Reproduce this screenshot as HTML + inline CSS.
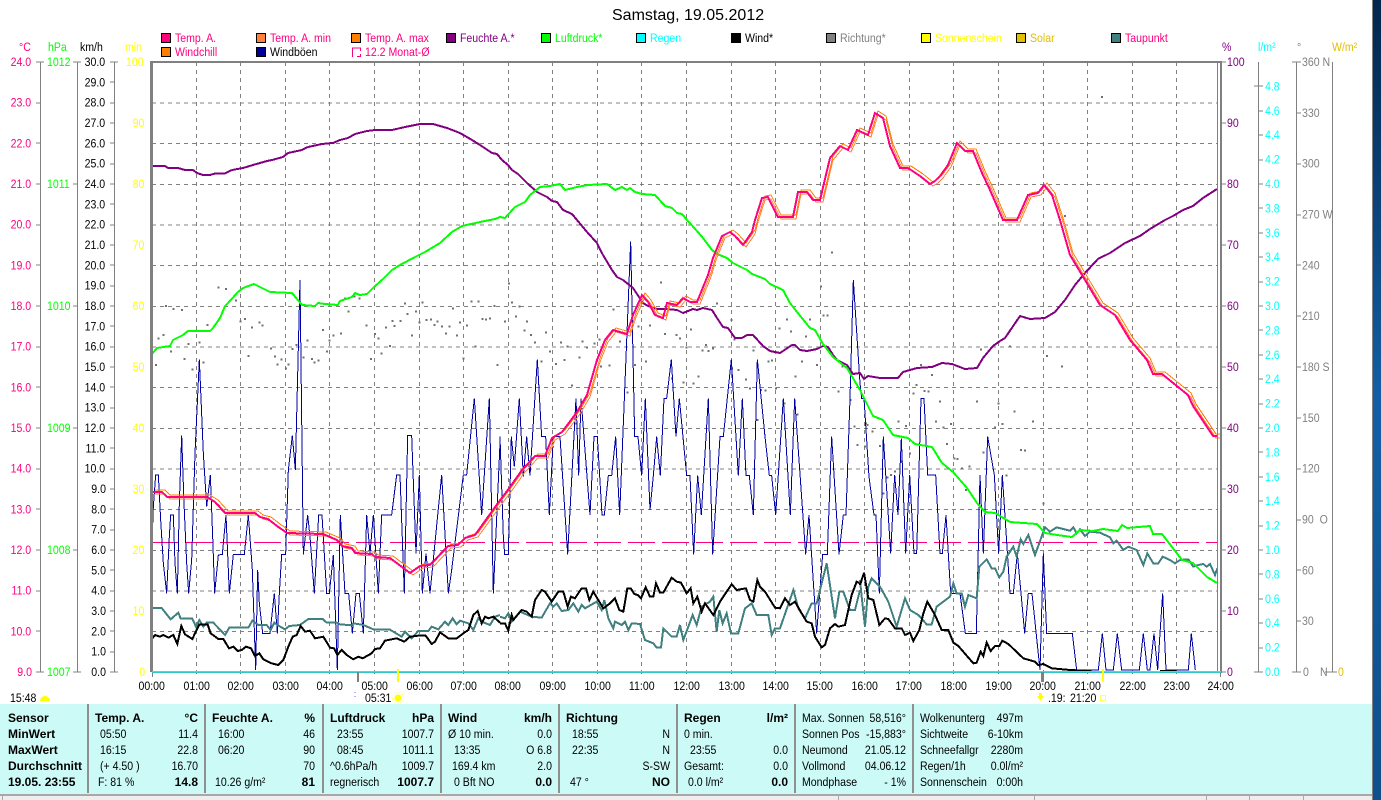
<!DOCTYPE html>
<html><head><meta charset="utf-8"><title>Samstag, 19.05.2012</title>
<style>
html,body{margin:0;padding:0;background:#fff;width:1381px;height:800px;overflow:hidden}
svg{position:absolute;left:0;top:0;display:block}
text{font-family:"Liberation Sans",sans-serif;font-size:12px;transform-box:fill-box;transform:scaleX(.88);transform-origin:0 50%;white-space:pre}
text[text-anchor=end]{transform-origin:100% 50%}
text[text-anchor=middle]{transform-origin:50% 50%}
text.b{font-weight:bold;transform:none}
text.t{font-size:16px;transform:none}
polyline,.l{fill:none;vector-effect:non-scaling-stroke;shape-rendering:crispEdges}
</style></head><body>
<svg width="1381" height="800" viewBox="0 0 1381 800" xmlns="http://www.w3.org/2000/svg">
<defs>
<linearGradient id="bg" x1="0" y1="0" x2="0" y2="1"><stop offset="0" stop-color="#03264c"/><stop offset=".5" stop-color="#125fa6"/><stop offset="1" stop-color="#0f4f8c"/></linearGradient>
<polyline id="temp" points="152,492 162,492 167,497 207,497 215,502 225,513 255,513 260,517 268,519 277,526 287,533 323,534 337,540 342,546 352,548 355,553 372,554 375,557 390,558 398,564 410,573 420,566 430,565 448,546 458,545 465,538 475,535 498,503 510,487 522,470 535,456 545,456 552,438 562,432 577,412 587,395 597,360 605,340 613,330 627,334 633,315 642,295 648,302 655,315 663,318 667,303 677,305 683,298 690,302 697,302 708,275 713,258 722,236 730,232 735,236 743,245 752,232 755,220 762,198 768,197 778,217 793,217 798,192 807,192 813,200 820,200 830,158 840,146 848,150 857,130 868,135 875,113 883,118 890,146 900,168 908,168 920,176 930,184 935,181 940,176 948,165 957,143 965,151 973,151 982,173 990,190 1003,220 1017,220 1028,195 1038,193 1044,185 1052,195 1060,220 1070,255 1085,280 1100,305 1115,315 1130,340 1147,360 1153,374 1162,374 1188,395 1193,406 1213,436 1217,436"/>
</defs>
<rect x="1372" y="0" width="1" height="800" fill="#808080"/>
<rect x="1373" y="0" width="8" height="800" fill="url(#bg)"/>

<text class="t" x="612" y="20" fill="#000">Samstag, 19.05.2012</text>

<!-- legend -->
<g stroke="#000" stroke-width="1">
<rect x="161.5" y="33.5" width="9" height="9" fill="#ff0080"/>
<rect x="256.5" y="33.5" width="9" height="9" fill="#ff8040"/>
<rect x="351.5" y="33.5" width="9" height="9" fill="#ff8000"/>
<rect x="446.5" y="33.5" width="9" height="9" fill="#800080"/>
<rect x="541.5" y="33.5" width="9" height="9" fill="#00ff00"/>
<rect x="636.5" y="33.5" width="9" height="9" fill="#00ffff"/>
<rect x="731.5" y="33.5" width="9" height="9" fill="#000"/>
<rect x="826.5" y="33.5" width="9" height="9" fill="#808080"/>
<rect x="921.5" y="33.5" width="9" height="9" fill="#ffff00"/>
<rect x="1016.5" y="33.5" width="9" height="9" fill="#e0c000"/>
<rect x="1111.5" y="33.5" width="9" height="9" fill="#408080"/>
<rect x="161.5" y="47.5" width="9" height="9" fill="#ff8000"/>
<rect x="256.5" y="47.5" width="9" height="9" fill="#000099"/>
</g>
<path class="l" d="M352.5 57V48H360.5V51M360.5 54V56.5H357" stroke="#ff0080"/>
<g>
<text x="175" y="42" fill="#ff0080">Temp. A.</text>
<text x="270" y="42" fill="#ff0080">Temp. A. min</text>
<text x="365" y="42" fill="#ff0080">Temp. A. max</text>
<text x="460" y="42" fill="#800080">Feuchte A.*</text>
<text x="555" y="42" fill="#00ff00">Luftdruck*</text>
<text x="650" y="42" fill="#00ffff">Regen</text>
<text x="745" y="42" fill="#000">Wind*</text>
<text x="840" y="42" fill="#808080">Richtung*</text>
<text x="935" y="42" fill="#ffff00">Sonnenschein</text>
<text x="1030" y="42" fill="#e0c000">Solar</text>
<text x="1125" y="42" fill="#ff0080">Taupunkt</text>
<text x="175" y="56" fill="#ff0080">Windchill</text>
<text x="270" y="56" fill="#000">Windböen</text>
<text x="365" y="56" fill="#ff0080">12.2 Monat-Ø</text>
</g>

<!-- axis units -->
<text x="19" y="51" fill="#ff0080">°C</text>
<text x="48" y="51" fill="#00ff00">hPa</text>
<text x="80" y="51" fill="#000">km/h</text>
<text x="125" y="51" fill="#ffff00">min</text>
<text x="1222" y="51" fill="#800080">%</text>
<text x="1258" y="51" fill="#00ffff">l/m²</text>
<text x="1297" y="51" fill="#808080">°</text>
<text x="1332" y="51" fill="#e0c000">W/m²</text>

<!-- grid -->
<path class="l" stroke="#808080" stroke-dasharray="4 4" d="M196.5 62V677M240.5 62V677M285.5 62V677M329.5 62V677M374.5 62V677M419.5 62V677M463.5 62V677M508.5 62V677M552.5 62V677M597.5 62V677M641.5 62V677M686.5 62V677M731.5 62V677M775.5 62V677M820.5 62V677M864.5 62V677M909.5 62V677M953.5 62V677M998.5 62V677M1043.5 62V677M1087.5 62V677M1132.5 62V677M1176.5 62V677"/>
<path class="l" stroke="#808080" stroke-dasharray="4 4" d="M152 103H1218M152 143.5H1218M152 184.5H1218M152 225H1218M152 265.5H1218M152 306.5H1218M152 347H1218M152 387.5H1218M152 428.5H1218M152 469H1218M152 509.5H1218M152 550.5H1218M152 591H1218M152 631.5H1218"/>
<path class="l" stroke="#808080" d="M152.5 672V677M1220.5 672V677"/>

<!-- direction dots -->
<g transform="translate(140 270) scale(.33333)">
<path class="l" stroke="#707070" stroke-width="2" d="M45 285h6M53 205h6M67 195h6M90 245h6M75 108h6M98 117h6M123 120h6M131 267h6M143 222h6M155 298h6M175 217h6M188 278h6M200 165h6M233 53h6M255 57h6M285 92h6M298 155h6M312 147h6M323 258h6M333 173h6M355 157h6M365 167h6M390 236h6M402 260h6M410 283h6M422 268h6M435 295h6M442 283h6M455 237h6M467 225h6M488 263h6M500 212h6M513 267h6M520 277h6M533 272h6M546 180h6M558 245h6M566 212h6M578 197h6M600 190h6M612 85h6M623 125h6M640 80h6M655 85h6M677 167h6M690 267h6M702 192h6M713 205h6M722 250h6M735 173h6M747 228h6M755 153h6M760 168h6M778 153h6M792 100h6M800 132h6M813 197h6M825 125h6M835 158h6M845 98h6M857 150h6M870 148h6M880 165h6M890 155h6M903 170h6M915 190h6M925 170h6M936 115h6M948 197h6M957 157h6M968 265h6M978 167h6M992 95h6M1003 230h6M1013 95h6M1025 147h6M1035 148h6M1047 146h6M1060 108h6M1070 285h6"/>
</g>
<g transform="translate(500 220) scale(.33333)">
<path class="l" stroke="#707070" stroke-width="2" d="M24 190h6M33 248h6M12 305h6M45 290h6M55 260h6M70 332h6M78 305h6M90 345h6M102 368h6M122 425h6M135 338h6M147 395h6M165 432h6M180 368h6M190 420h6M200 380h6M213 497h6M225 610h6M235 413h6M245 365h6M258 383h6M280 370h6M295 358h6M300 440h6M325 437h6M337 268h6M345 335h6M357 365h6M380 518h6M402 435h6M413 320h6M435 425h6M447 317h6M480 188h6M492 342h6M513 475h6M527 345h6M537 355h6M547 488h6M557 382h6M570 328h6M578 490h6M592 470h6M604 392h6M615 375h6M622 393h6M636 385h6M648 250h6M692 300h6M700 358h6M693 445h6M713 450h6M735 478h6M747 505h6M758 392h6M770 600h6M780 510h6M793 512h6M803 425h6M813 422h6M825 505h6M835 325h6M850 550h6M858 298h6M870 335h6M883 470h6M890 583h6M903 425h6M915 350h6M927 298h6M948 435h6M960 200h6M968 287h6M980 287h6M993 98h6M1013 515h6M1025 440h6M1048 540h6M1060 620h6M1070 675h6"/>
</g>
<g transform="translate(860 340) scale(.33333)">
<path class="l" stroke="#707070" stroke-width="2" d="M15 250h6M20 255h6M35 275h6M12 320h6M57 318h6M68 460h6M80 412h6M90 405h6M102 395h6M113 245h6M123 365h6M135 258h6M147 340h6M158 160h6M167 135h6M180 75h6M190 153h6M202 155h6M213 105h6M225 245h6M237 185h6M247 262h6M258 312h6M270 252h6M280 355h6M290 357h6M303 385h6M315 450h6M325 380h6M348 185h6M360 28h6M368 338h6M402 263h6M413 190h6M425 252h6M437 407h6M447 20h6M460 215h6M480 330h6M492 332h6M516 245h6M558 48h6M603 80h6M548 490h6"/>
</g>
<path class="l" stroke="#707070" stroke-width="2" d="M1101 97h2M1064 216h2"/>

<!-- 12.2 monthly mean -->
<path class="l" stroke="#ff0080" stroke-dasharray="27 7" d="M152 542.5H1218"/>

<!-- gusts -->
<g transform="translate(140 270) scale(.33333)">
<polyline stroke="#0000a0" stroke-width="1" points="35,850 40,710 47,615 55,615 62,750 70,880 80,970 88,800 92,735 100,735 105,880 112,970 118,700 125,497 132,700 140,880 146,970 155,870 165,550 178,268 190,550 200,710 211,615 218,800 224,970 235,855 247,853 258,735 268,970 280,853 313,853 325,735 337,900 347,1200 353,900 358,1000 368,1090 390,1090 403,970 412,1090 418,970 425,853 437,853 445,600 457,497 466,600 480,30 490,853 503,735 510,800 523,970 536,735 546,735 560,970 568,970 580,855 592,1200 601,735 615,970 626,970 637,1090 648,970 658,970 670,1090 680,735 690,850 700,735 715,970 725,735 755,735 770,615 780,615 793,970 803,497 815,497 828,850 838,615 847,970 858,850 870,970 905,615 925,970 935,900 970,615 980,615 1003,385 1025,735 1048,385 1060,970 1080,520"/>
<polyline stroke="#408080" stroke-width="2" points="35,1014 65,1014 92,1048 115,1028 122,1046 157,1046 168,1070 178,1050 190,1070 200,1058 220,1058 255,1095 268,1073 325,1073 337,1052 355,1065 380,1065 392,1080 403,1058 412,1065 435,1078 448,1068 480,1065 505,1047 548,1047 560,1058 590,1058 600,1063 635,1066 640,1060 670,1065 700,1078 748,1078 785,1100 795,1085 815,1105 835,1083 865,1083 875,1070 895,1078 915,1055 925,1065 938,1045 950,1063 960,1052 985,1060 1000,1080 1015,1045 1025,1055 1050,1065 1065,1040 1080,1035"/>
<polyline stroke="#000" stroke-width="2" points="35,1108 45,1095 60,1100 70,1095 85,1103 100,1095 112,1122 124,1068 135,1093 157,1107 178,1063 203,1063 212,1090 235,1107 250,1107 267,1135 280,1130 293,1143 305,1140 318,1130 333,1135 345,1158 358,1150 370,1168 395,1180 415,1185 430,1170 445,1130 458,1100 470,1095 482,1068 495,1085 510,1082 525,1105 550,1100 570,1133 582,1135 592,1155 605,1140 620,1155 640,1168 655,1160 668,1165 695,1150 705,1137 720,1135 735,1112 770,1105 793,1115 810,1100 835,1097 857,1097 875,1122 885,1115 900,1087 925,1105 950,1105 970,1090 985,1080 1000,1035 1013,1023 1025,1060 1035,1040 1045,1045 1060,1040 1080,1058"/>
</g>
<g transform="translate(500 220) scale(.33333)">
<polyline stroke="#0000a0" stroke-width="1" points="0,650 10,950 14,1003 25,1003 34,650 43,740 58,535 70,770 80,650 90,767 112,418 125,650 137,650 148,885 160,650 180,650 203,1003 228,535 236,767 243,535 270,885 282,650 292,650 306,885 313,885 325,767 335,767 347,650 359,885 392,65 404,650 414,650 425,767 436,535 450,870 460,767 470,650 481,767 492,535 500,535 514,418 528,650 538,535 560,767 570,767 581,1003 593,767 604,885 625,535 638,1003 660,650 670,650 694,418 715,767 727,535 738,767 748,767 760,885 772,418 795,650 808,767 815,767 827,885 850,535 871,885 884,535 917,1003 927,885 950,1240 968,1003 982,1003 995,650 1017,1003 1030,885 1038,885 1050,535 1060,180 1080,490"/>
<polyline stroke="#408080" stroke-width="2" points="0,1190 15,1195 25,1180 35,1205 60,1175 95,1190 125,1193 150,1150 160,1160 170,1150 185,1173 205,1170 220,1150 235,1175 245,1155 255,1165 290,1145 305,1170 313,1140 325,1195 340,1225 345,1205 365,1215 375,1205 385,1230 395,1210 420,1212 435,1260 460,1270 470,1283 483,1283 490,1225 515,1250 530,1250 540,1215 550,1260 578,1185 590,1215 605,1160 630,1145 640,1130 650,1235 658,1170 668,1210 680,1180 693,1240 715,1240 735,1165 755,1150 770,1185 805,1185 815,1245 825,1225 840,1225 880,1110 895,1165 915,1195 935,1150 950,1150 965,1090 980,1030 1005,1195 1018,1115 1030,1115 1050,1170 1065,1170 1080,1110"/>
<polyline stroke="#000" stroke-width="2" points="0,1210 15,1210 25,1232 35,1185 40,1200 65,1170 80,1175 95,1190 105,1140 125,1110 135,1115 155,1145 175,1115 190,1115 203,1160 213,1130 225,1135 245,1105 258,1105 268,1140 280,1115 310,1165 330,1150 345,1135 358,1170 370,1175 382,1105 392,1105 403,1122 413,1125 423,1135 437,1102 450,1130 460,1130 468,1090 480,1118 490,1118 515,1073 530,1085 543,1088 560,1120 572,1105 580,1150 592,1130 605,1175 615,1150 640,1185 660,1145 680,1115 695,1093 710,1110 738,1105 750,1140 760,1145 772,1080 780,1100 795,1115 825,1163 840,1165 855,1135 870,1155 885,1145 905,1180 920,1205 935,1210 945,1250 965,1282 975,1275 990,1225 1005,1212 1015,1220 1035,1215 1055,1125 1070,1085 1080,1090"/>
</g>
<g transform="translate(860 340) scale(.33333)">
<polyline stroke="#0000a0" stroke-width="1" points="0,130 5,175 12,175 27,410 42,525 48,525 58,760 70,290 92,640 104,405 114,525 124,295 137,640 149,405 162,640 170,640 183,175 192,175 203,405 227,405 240,640 247,640 258,525 272,760 300,760 316,880 349,880 360,405 370,640 383,290 403,405 416,640 427,405 450,760 460,760 472,640 494,880 505,760 516,760 540,990 550,640 560,880 637,880 650,990 715,990 727,880 738,990 760,990 772,880 785,990 838,990 850,880 862,990 870,990 882,880 893,990 900,880 908,760 918,990 985,990 994,880 1006,990"/>
<polyline stroke="#408080" stroke-width="2" points="0,720 5,770 15,860 25,740 35,715 60,740 85,785 110,860 135,775 150,810 175,825 200,853 215,853 230,800 270,770 280,730 290,760 305,760 315,800 325,765 350,775 358,680 380,658 395,685 405,685 418,712 430,695 440,650 460,620 470,650 482,598 490,612 505,585 525,645 555,562 570,575 590,562 630,572 640,562 650,580 660,568 675,588 690,575 720,578 750,592 760,610 770,602 790,630 805,620 830,630 850,675 862,640 880,670 895,670 908,650 930,660 945,670 960,660 985,658 1000,680 1015,675 1030,672 1040,680 1050,672 1065,705 1072,685"/>
<polyline stroke="#000" stroke-width="2" points="0,735 12,698 25,775 40,780 58,855 75,835 85,837 105,865 125,865 135,885 150,878 160,903 178,870 190,820 202,785 225,825 245,870 265,870 280,908 295,918 340,970 350,968 362,935 370,948 380,908 392,933 405,918 418,918 427,902 445,912 490,955 525,965 535,975 550,972 575,985 630,990 695,993"/>
<polyline stroke="#000" stroke-width="2" points="900,993 950,993"/>
</g>

<!-- humidity -->
<polyline stroke="#800080" stroke-width="2" points="152,166 165,166 168,168 178,168 185,170 193,170 197,173 203,175 210,175 215,173.5 225,173.5 232,170 243,168 253,165 267,161 272,160 283,157 288,153 302,150 308,147 322,144 333,143 340,140 348,138 355,134 367,131 375,130 392,130 405,127 420,124 433,124 447,128 460,133 472,140 480,145 492,153 497,154 502,160 508,165 512,170 518,174 527,183 537,192 547,197 552,201 557,202 563,210 572,214 577,220 587,232 597,243 603,255 612,270 617,277 623,280 633,288 643,303 648,306 657,309 667,309 677,310 683,313 693,309 697,310 703,308 712,310 717,318 723,327 728,328 735,338 742,338 747,335 753,335 763,346 770,351 780,353 792,345 795,345 800,350 807,351 817,349 823,346 828,347 833,355 837,360 847,365 853,374 860,373 864,379 868,376 880,378 898,378 903,372 917,368 932,367 942,363 952,364 965,369 977,368 983,358 993,346 1000,341 1005,338 1020,316 1030,319 1045,318 1055,312 1065,300 1075,285 1085,273 1098,259 1110,253 1125,243 1140,236 1150,229 1165,220 1173,216 1183,210 1193,206 1203,198 1217,189"/>
<!-- pressure -->
<polyline stroke="#00ff00" stroke-width="2" points="152,354 157,348 170,346 173,340 183,335 188,331 195,331 210,331 213,328 220,318 225,306 228,303 238,292 243,288 254,284 262,288 270,292 292,293 302,305 315,306 318,303 325,304 338,305 340,301 352,297 355,293 360,295 367,294 373,288 383,279 392,270 400,265 415,257 425,252 440,243 452,232 462,226 480,222 495,219 500,217 505,218 515,207 525,202 530,195 540,187 550,186 560,184 565,190 577,187 588,185 607,184 615,190 622,187 627,190 630,188 635,192 642,194 655,195 665,206 672,208 677,213 682,214 687,220 697,231 703,238 712,250 717,254 727,258 733,263 747,270 752,274 765,279 770,284 783,290 790,303 797,312 810,328 815,330 823,344 833,357 847,368 860,390 873,416 883,420 893,435 908,438 915,444 932,447 942,463 953,472 967,488 977,503 985,512 995,513 1010,522 1037,524 1045,533 1057,535 1072,537 1080,530 1093,531 1103,529 1118,531 1122,525 1127,528 1150,526 1153,534 1162,534 1172,547 1182,560 1193,563 1207,577 1217,583"/>
<!-- temperature -->
<use href="#temp" transform="translate(3 -2)" stroke="#ff8000" stroke-width="1" fill="none"/>
<use href="#temp" transform="translate(3 2)" stroke="#ff8040" stroke-width="1" fill="none"/>
<use href="#temp" stroke="#ff0080" stroke-width="2" fill="none"/>

<!-- frame -->
<rect x="150" y="61" width="3" height="611" fill="#808080"/>
<rect x="150" y="61" width="1072" height="2" fill="#808080"/>
<rect x="1220" y="61" width="2" height="612" fill="#808080"/>
<rect x="1217" y="62" width="1" height="610" fill="#808080"/>
<rect x="152" y="672" width="1069" height="1" fill="#33c8c8"/>
<rect x="152" y="671" width="1069" height="1" fill="#40e0e0"/>
<rect x="357" y="672" width="2" height="10" fill="#808080"/>
<rect x="397" y="669" width="2" height="13" fill="#ffff00"/>
<rect x="1041" y="672" width="3" height="10" fill="#808080"/>
<rect x="1102" y="669" width="2" height="13" fill="#ffff00"/>

<!-- axes -->
<path class="l" stroke="#808080" d="M40.5 62V672M77.5 62V672M114.5 62V672M1258.5 62V672M1296.5 62V672M1332.5 62V672"/>
<path class="l" stroke="#808080" d="M36 62H44M36 103H40M36 143H40M36 184H40M36 225H40M36 265H40M36 306H40M36 347H40M36 387H40M36 428H40M36 469H40M36 509H40M36 550H40M36 591H40M36 631H40M36 672H44"/>
<path class="l" stroke="#808080" d="M73 62H81M73 184H77M73 306H77M73 428H77M73 550H77M73 672H81"/>
<path class="l" stroke="#808080" d="M110 62H118M110 82H114M110 103H114M110 123H114M110 143H114M110 164H114M110 184H114M110 204H114M110 225H114M110 245H114M110 265H114M110 286H114M110 306H114M110 326H114M110 347H114M110 367H114M110 387H114M110 408H114M110 428H114M110 448H114M110 469H114M110 489H114M110 509H114M110 530H114M110 550H114M110 570H114M110 591H114M110 611H114M110 631H114M110 652H114M110 672H118"/>
<path class="l" stroke="#808080" d="M1221 62H1226M1221 123H1226M1221 184H1226M1221 245H1226M1221 306H1226M1221 367H1226M1221 428H1226M1221 489H1226M1221 550H1226M1221 611H1226M1221 672H1226"/>
<path class="l" stroke="#808080" d="M1254 86H1263M1258 111H1263M1258 135H1263M1258 160H1263M1258 184H1263M1258 208H1263M1258 233H1263M1258 257H1263M1258 282H1263M1258 306H1263M1258 330H1263M1258 355H1263M1258 379H1263M1258 404H1263M1258 428H1263M1258 452H1263M1258 477H1263M1258 501H1263M1258 526H1263M1258 550H1263M1258 574H1263M1258 599H1263M1258 623H1263M1258 648H1263M1254 672H1263"/>
<path class="l" stroke="#808080" d="M1292 62H1301M1296 113H1301M1296 164H1301M1296 215H1301M1296 265H1301M1296 316H1301M1296 367H1301M1296 418H1301M1296 469H1301M1296 520H1301M1296 570H1301M1296 621H1301M1292 672H1301M1325 672H1337"/>

<!-- axis labels -->
<g transform="translate(0 4)" fill="#ff0080" text-anchor="end">
<text x="34" y="62">24.0</text><text x="34" y="102.7">23.0</text><text x="34" y="143.3">22.0</text><text x="34" y="184">21.0</text><text x="34" y="224.7">20.0</text><text x="34" y="265.3">19.0</text><text x="34" y="306">18.0</text><text x="34" y="346.7">17.0</text><text x="34" y="387.3">16.0</text><text x="34" y="428">15.0</text><text x="34" y="468.7">14.0</text><text x="34" y="509.3">13.0</text><text x="34" y="550">12.0</text><text x="34" y="590.7">11.0</text><text x="34" y="631.3">10.0</text><text x="34" y="672">9.0</text>
</g>
<g transform="translate(0 4)" fill="#00ff00">
<text x="47" y="62">1012</text><text x="47" y="184">1011</text><text x="47" y="306">1010</text><text x="47" y="428">1009</text><text x="47" y="550">1008</text><text x="47" y="672">1007</text>
</g>
<g transform="translate(0 4)" fill="#000" text-anchor="end">
<text x="108" y="62">30.0</text><text x="108" y="82.3">29.0</text><text x="108" y="102.7">28.0</text><text x="108" y="123">27.0</text><text x="108" y="143.3">26.0</text><text x="108" y="163.7">25.0</text><text x="108" y="184">24.0</text><text x="108" y="204.3">23.0</text><text x="108" y="224.7">22.0</text><text x="108" y="245">21.0</text><text x="108" y="265.3">20.0</text><text x="108" y="285.7">19.0</text><text x="108" y="306">18.0</text><text x="108" y="326.3">17.0</text><text x="108" y="346.7">16.0</text><text x="108" y="367">15.0</text><text x="108" y="387.3">14.0</text><text x="108" y="407.7">13.0</text><text x="108" y="428">12.0</text><text x="108" y="448.3">11.0</text><text x="108" y="468.7">10.0</text><text x="108" y="489">9.0</text><text x="108" y="509.3">8.0</text><text x="108" y="529.7">7.0</text><text x="108" y="550">6.0</text><text x="108" y="570.3">5.0</text><text x="108" y="590.7">4.0</text><text x="108" y="611">3.0</text><text x="108" y="631.3">2.0</text><text x="108" y="651.7">1.0</text><text x="108" y="672">0.0</text>
</g>
<g transform="translate(0 4)" fill="#ffff00" text-anchor="end">
<text x="146" y="62">100</text><text x="146" y="123">90</text><text x="146" y="184">80</text><text x="146" y="245">70</text><text x="146" y="306">60</text><text x="146" y="367">50</text><text x="146" y="428">40</text><text x="146" y="489">30</text><text x="146" y="550">20</text><text x="146" y="611">10</text><text x="146" y="672">0</text>
</g>
<g transform="translate(0 4)" fill="#800080">
<text x="1227" y="62">100</text><text x="1227" y="123">90</text><text x="1227" y="184">80</text><text x="1227" y="245">70</text><text x="1227" y="306">60</text><text x="1227" y="367">50</text><text x="1227" y="428">40</text><text x="1227" y="489">30</text><text x="1227" y="550">20</text><text x="1227" y="611">10</text><text x="1227" y="672">0</text>
</g>
<g transform="translate(0 4)" fill="#00ffff">
<text x="1265" y="86.4">4.8</text><text x="1265" y="110.8">4.6</text><text x="1265" y="135.2">4.4</text><text x="1265" y="159.6">4.2</text><text x="1265" y="184">4.0</text><text x="1265" y="208.4">3.8</text><text x="1265" y="232.8">3.6</text><text x="1265" y="257.2">3.4</text><text x="1265" y="281.6">3.2</text><text x="1265" y="306">3.0</text><text x="1265" y="330.4">2.8</text><text x="1265" y="354.8">2.6</text><text x="1265" y="379.2">2.4</text><text x="1265" y="403.6">2.2</text><text x="1265" y="428">2.0</text><text x="1265" y="452.4">1.8</text><text x="1265" y="476.8">1.6</text><text x="1265" y="501.2">1.4</text><text x="1265" y="525.6">1.2</text><text x="1265" y="550">1.0</text><text x="1265" y="574.4">0.8</text><text x="1265" y="598.8">0.6</text><text x="1265" y="623.2">0.4</text><text x="1265" y="647.6">0.2</text><text x="1265" y="672">0.0</text>
</g>
<g transform="translate(0 4)" fill="#808080">
<text x="1302" y="62">360 N</text><text x="1302" y="112.8">330</text><text x="1302" y="163.7">300</text><text x="1302" y="214.5">270 W</text><text x="1302" y="265.3">240</text><text x="1302" y="316.2">210</text><text x="1302" y="367">180 S</text><text x="1302" y="417.8">150</text><text x="1302" y="468.7">120</text><text x="1302" y="519.5">90&#160;&#160;O</text><text x="1302" y="570.3">60</text><text x="1302" y="621.2">30</text><text x="1303" y="672">0</text><text x="1320" y="672">N</text>
</g>
<text x="1338" y="676" fill="#e0c000">0</text>

<!-- time labels -->
<g fill="#000" text-anchor="middle" transform="translate(1.5 0)">
<text x="152" y="690">00:00</text><text x="197" y="690">01:00</text><text x="241" y="690">02:00</text><text x="286" y="690">03:00</text><text x="330" y="690">04:00</text><text x="375" y="690">05:00</text><text x="420" y="690">06:00</text><text x="464" y="690">07:00</text><text x="508" y="690">08:00</text><text x="553" y="690">09:00</text><text x="598" y="690">10:00</text><text x="642" y="690">11:00</text><text x="687" y="690">12:00</text><text x="732" y="690">13:00</text><text x="776" y="690">14:00</text><text x="820" y="690">15:00</text><text x="865" y="690">16:00</text><text x="909" y="690">17:00</text><text x="954" y="690">18:00</text><text x="999" y="690">19:00</text><text x="1043" y="690">20:00</text><text x="1088" y="690">21:00</text><text x="1133" y="690">22:00</text><text x="1177" y="690">23:00</text><text x="1221" y="690">24:00</text>
</g>
<text x="10" y="702" fill="#000">15:48</text>
<path d="M40 701a5 5 0 0 1 10 0z" fill="#ffff00"/>
<text x="365" y="702" fill="#000">05:31</text>
<circle cx="398" cy="698" r="3.5" fill="#ffff00"/>
<circle cx="398" cy="698" r="5.5" fill="none" stroke="#ffff80" stroke-width="1" stroke-dasharray="1.5 1.2"/>
<path class="l" stroke="#6060ff" d="M355 692v1M355 696v1"/>
<path d="M1039 693h3v3h2l-3.500 5-3.500-5h2z" fill="#ffff00"/>
<text x="1048" y="702" fill="#000">.19:</text>
<text x="1070" y="702" fill="#000">21:20</text>
<rect x="1100.500" y="695.500" width="5" height="5" fill="none" stroke="#ffff60" stroke-width="1"/>

<!-- info panel -->
<rect x="0" y="704" width="1372" height="90" fill="#ccfaf7"/>
<path class="l" stroke="#909090" stroke-width="2" d="M88 704V793M205 704V793M323 704V793M441 704V793M559 704V793M677 704V793M795 704V793M913 704V793"/>
<rect x="0" y="794" width="1372" height="6" fill="#eeeeee"/>
<rect x="0" y="794" width="1372" height="2" fill="#a8a8a8"/>
<path class="l" stroke="#a8a8a8" d="M2.500 796V800M1034.500 796V800M1206.500 796V800M1249.500 796V800M1303.500 796V800M838.500 796V800"/>

<g fill="#000">
<text class="b" x="8" y="722">Sensor</text><text class="b" x="8" y="738">MinWert</text><text class="b" x="8" y="754">MaxWert</text><text class="b" x="8" y="770">Durchschnitt</text><text class="b" x="8" y="786">19.05. 23:55</text>

<text class="b" x="95" y="722">Temp. A.</text><text class="b" x="198" y="722" text-anchor="end">°C</text>
<text x="100" y="738">05:50</text><text x="198" y="738" text-anchor="end">11.4</text>
<text x="100" y="754">16:15</text><text x="198" y="754" text-anchor="end">22.8</text>
<text x="100" y="770">(+ 4.50 )</text><text x="198" y="770" text-anchor="end">16.70</text>
<text x="98" y="786">F: 81 %</text><text class="b" x="198" y="786" text-anchor="end">14.8</text>

<text class="b" x="212" y="722">Feuchte A.</text><text class="b" x="315" y="722" text-anchor="end">%</text>
<text x="218" y="738">16:00</text><text x="315" y="738" text-anchor="end">46</text>
<text x="218" y="754">06:20</text><text x="315" y="754" text-anchor="end">90</text>
<text x="315" y="770" text-anchor="end">70</text>
<text x="215" y="786">10.26 g/m²</text><text class="b" x="315" y="786" text-anchor="end">81</text>

<text class="b" x="330" y="722">Luftdruck</text><text class="b" x="434" y="722" text-anchor="end">hPa</text>
<text x="337" y="738">23:55</text><text x="434" y="738" text-anchor="end">1007.7</text>
<text x="337" y="754">08:45</text><text x="434" y="754" text-anchor="end">1011.1</text>
<text x="330" y="770">^0.6hPa/h</text><text x="434" y="770" text-anchor="end">1009.7</text>
<text x="330" y="786">regnerisch</text><text class="b" x="434" y="786" text-anchor="end">1007.7</text>

<text class="b" x="448" y="722">Wind</text><text class="b" x="552" y="722" text-anchor="end">km/h</text>
<text x="448" y="738">Ø 10 min.</text><text x="552" y="738" text-anchor="end">0.0</text>
<text x="454" y="754">13:35</text><text x="552" y="754" text-anchor="end">O 6.8</text>
<text x="452" y="770">169.4 km</text><text x="552" y="770" text-anchor="end">2.0</text>
<text x="454" y="786">0 Bft NO</text><text class="b" x="552" y="786" text-anchor="end">0.0</text>

<text class="b" x="566" y="722">Richtung</text>
<text x="572" y="738">18:55</text><text x="670" y="738" text-anchor="end">N</text>
<text x="572" y="754">22:35</text><text x="670" y="754" text-anchor="end">N</text>
<text x="670" y="770" text-anchor="end">S-SW</text>
<text x="570" y="786">47 °</text><text class="b" x="670" y="786" text-anchor="end">NO</text>

<text class="b" x="684" y="722">Regen</text><text class="b" x="788" y="722" text-anchor="end">l/m²</text>
<text x="684" y="738">0 min.</text>
<text x="690" y="754">23:55</text><text x="788" y="754" text-anchor="end">0.0</text>
<text x="684" y="770">Gesamt:</text><text x="788" y="770" text-anchor="end">0.0</text>
<text x="688" y="786">0.0 l/m²</text><text class="b" x="788" y="786" text-anchor="end">0.0</text>

<text x="802" y="722">Max. Sonnen</text><text x="906" y="722" text-anchor="end">58,516°</text>
<text x="802" y="738">Sonnen Pos</text><text x="906" y="738" text-anchor="end">-15,883°</text>
<text x="802" y="754">Neumond</text><text x="906" y="754" text-anchor="end">21.05.12</text>
<text x="802" y="770">Vollmond</text><text x="906" y="770" text-anchor="end">04.06.12</text>
<text x="802" y="786">Mondphase</text><text x="906" y="786" text-anchor="end">- 1%</text>

<text x="920" y="722">Wolkenunterg</text><text x="1023" y="722" text-anchor="end">497m</text>
<text x="920" y="738">Sichtweite</text><text x="1023" y="738" text-anchor="end">6-10km</text>
<text x="920" y="754">Schneefallgr</text><text x="1023" y="754" text-anchor="end">2280m</text>
<text x="920" y="770">Regen/1h</text><text x="1023" y="770" text-anchor="end">0.0l/m²</text>
<text x="920" y="786">Sonnenschein</text><text x="1023" y="786" text-anchor="end">0:00h</text>
</g>
</svg>
</body></html>
